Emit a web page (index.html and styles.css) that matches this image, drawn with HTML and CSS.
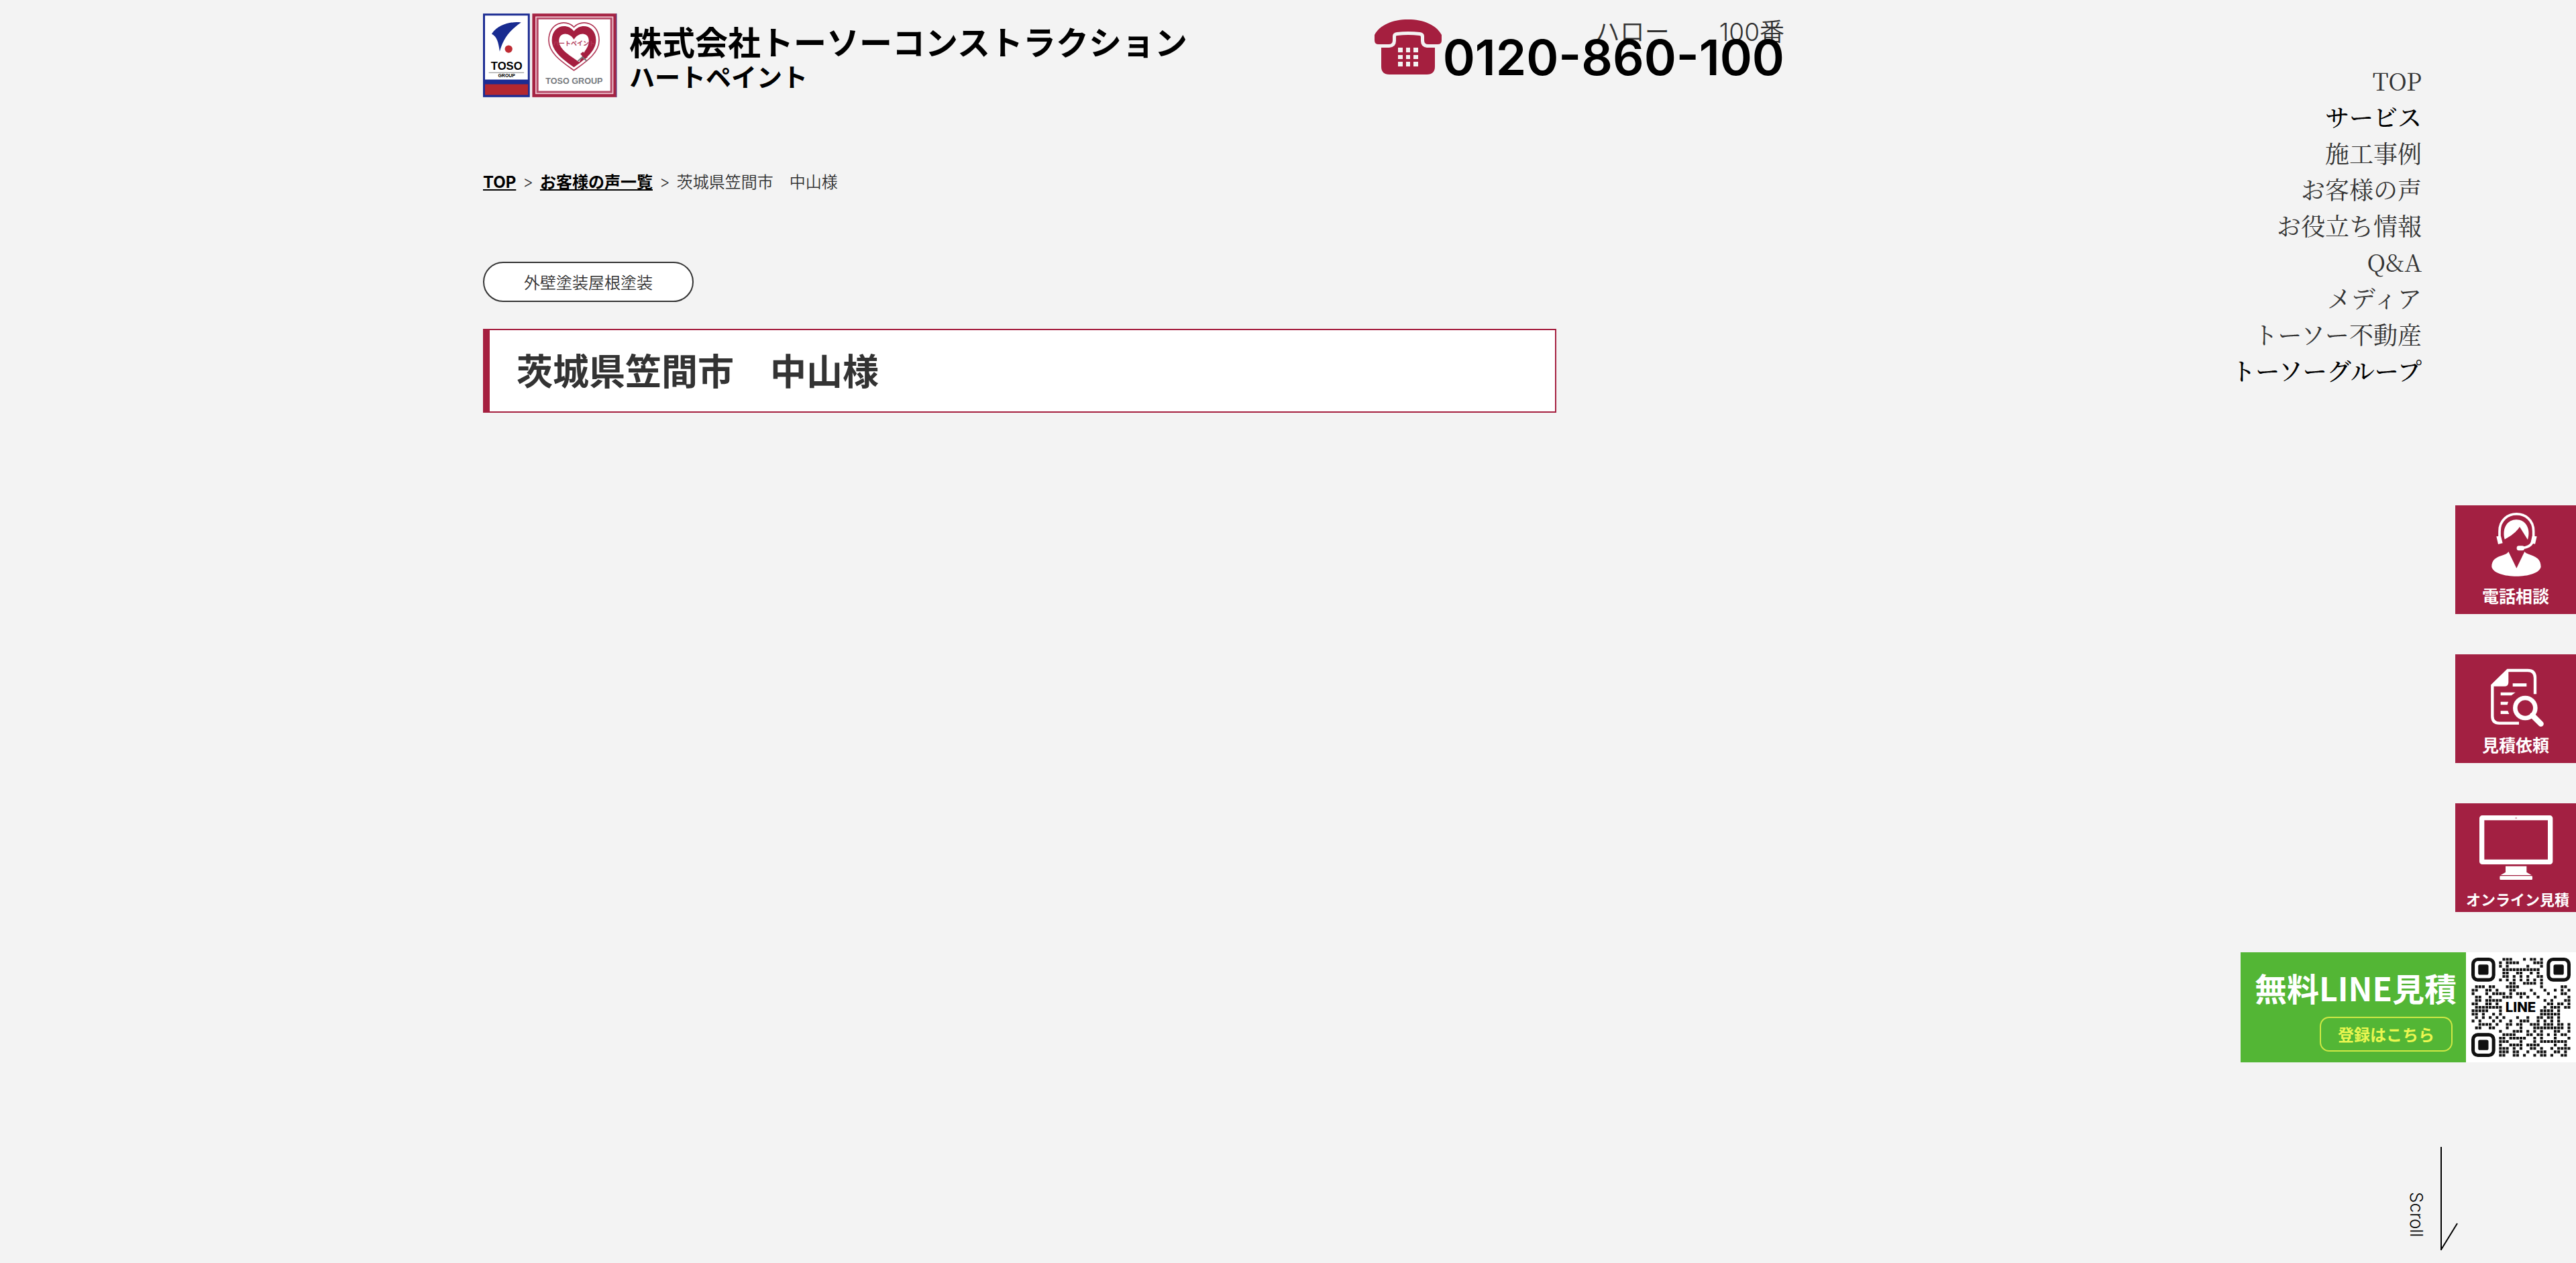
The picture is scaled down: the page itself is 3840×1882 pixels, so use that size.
FILE: index.html
```html
<!DOCTYPE html>
<html lang="ja">
<head>
  <meta charset="UTF-8">
  <meta name="viewport" content="width=device-width, initial-scale=1.0">
  <title>茨城県笠間市 中山様 | トーソーコンストラクション</title>
  <link rel="stylesheet" href="styles.css">
</head>
<body>
  <div class="page">
    <div class="content">
      <header class="header">
        <a class="brand" href="#">
          <svg class="brand-logo" viewBox="60 60 602 375" aria-hidden="true">
            <!-- TOSO mark -->
            <rect x="60" y="60" width="210" height="375" fill="#1c2c93"/>
            <rect x="69" y="69" width="192" height="287" fill="#fff"/>
            <rect x="69" y="377" width="193" height="48" fill="#b4272f"/>
            <path d="M231 100C190 94 130 106 99 151C122 164 129 185 135 230C147 190 163 146 231 100Z" fill="#182b90"/>
            <circle cx="175" cy="219" r="17" fill="#bf2b33"/>
            <text class="logo-toso" x="166" y="312">TOSO</text>
            <path d="M86 325H244" stroke="#888" stroke-width="3"/>
            <text class="logo-group" x="166" y="345">GROUP</text>
            <!-- Heart Paint mark -->
            <rect x="281" y="60" width="379" height="375" fill="#a52343"/>
            <rect x="657" y="60" width="3" height="375" fill="#4b4a97"/>
            <rect x="295" y="73" width="350" height="348" fill="#f1ccd6"/>
            <rect x="300" y="78" width="340" height="338" fill="#b54765"/>
            <rect x="309" y="86" width="322" height="321" fill="#fff"/>
            <path d="M468 315C420 280 355 240 355 180C355 100 432 82 468 121C504 82 581 100 581 180C581 240 516 280 468 315Z" fill="#fff" stroke="#b23a59" stroke-width="5"/>
            <path d="M468 301C425 270 369 232 369 180C369 112 438 100 468 139C498 100 567 112 567 180C567 232 511 270 468 301Z" fill="#a51f40"/>
            <path d="M492 278C456 252 401 222 401 183C401 142 448 142 468 177C488 142 535 142 535 183C535 200 528 215 516 230Z" fill="#fff"/>
            <path d="M497 241l12-10 20 25-12 9z" fill="#a51f40"/>
            <path d="M486 273l20-18 20 18" fill="none" stroke="#777" stroke-width="6"/>
            <text class="logo-heart" x="468" y="205">ハートペイント</text>
            <text class="logo-name" x="469" y="376">TOSO GROUP</text>
          </svg>
          <span class="brand-text">
            <span class="brand-company">株式会社トーソーコンストラクション</span>
            <span class="brand-shop">ハートペイント</span>
          </span>
        </a>
        <a class="tel" href="tel:0120860100">
          <svg class="tel-icon" viewBox="0 0 100 82" aria-hidden="true">
            <path d="M0 23C8 8 27 0 50 0C73 0 92 8 100 23V31Q100 37 94 37H80Q74 37 74 31V25Q74 20 68 19Q50 17 33 19Q27 20 27 25V31Q27 37 21 37H6Q0 37 0 31Z" fill="#a51f3f"/>
            <path d="M10 42H22Q32 41 32 32V25Q32 24 34 24Q50 22 67 24Q69 24 69 26V32Q69 41 78 42H90V70Q90 82 78 82H22Q10 82 10 70Z" fill="#a51f3f"/>
            <path d="M35 42h7v7h-7zM47 42h6v7h-6zM58 42h7v7h-7zM35 53h7v6h-7zM47 53h6v6h-6zM58 53h7v6h-7zM35 63h7v7h-7zM47 63h6v7h-6zM58 63h7v7h-7z" fill="#f3f3f3"/>
          </svg>
          <span class="tel-text">
            <span class="tel-hello">ハロー　　100番</span>
            <span class="tel-number">0120-860-100</span>
          </span>
        </a>
      </header>

      <nav class="breadcrumb" aria-label="パンくず">
        <a href="#">TOP</a>
        <span>&gt;</span>
        <a href="#">お客様の声一覧</a>
        <span>&gt;</span>
        <span>茨城県笠間市　中山様</span>
      </nav>

      <main class="voice">
        <p class="voice-tag">外壁塗装屋根塗装</p>
        <h1 class="voice-title">茨城県笠間市　中山様</h1>
      </main>
    </div>

    <aside class="side">
      <nav class="menu">
        <a href="#">TOP</a>
        <a class="menu-parent" href="#">サービス</a>
        <a href="#">施工事例</a>
        <a href="#">お客様の声</a>
        <a href="#">お役立ち情報</a>
        <a href="#">Q&amp;A</a>
        <a href="#">メディア</a>
        <a href="#">トーソー不動産</a>
        <a class="menu-parent" href="#">トーソーグループ</a>
      </nav>

      <div class="contact">
        <a class="contact-btn" href="#">
          <svg viewBox="60 39 540 360" aria-hidden="true">
            <path d="M258 190V155C258 52 410 52 410 155V190C405 218 385 229 350 230" fill="none" stroke="#fff" stroke-width="11"/>
            <path d="M244 178l20-2 8 32-20 5zM404 176l21 2-8 34-20-5z" fill="#fff"/>
            <rect x="335" y="220" width="34" height="21" rx="9" fill="#fff"/>
            <path d="M281 191C268 137 296 103 333 103C374 103 400 143 384 193L348 135C335 157 308 177 281 191Z" fill="#fff"/>
            <path d="M298 246L334 320L370 246C386 267 443 258 443 314C430 370 237 370 223 314C223 258 286 270 298 246Z" fill="#fff"/>
          </svg>
          <span>電話相談</span>
        </a>
        <a class="contact-btn" href="#">
          <svg viewBox="60 45 540 360" aria-hidden="true">
            <path d="M417 223V150Q417 117 384 117H295L226 184V322Q226 353 257 353H345" fill="none" stroke="#fff" stroke-width="13"/>
            <path d="M298 117V170Q298 188 280 188H224Z" fill="#fff"/>
            <path d="M317 175h62v14h-62zM263 215h66l-18 14h-48zM263 257h34l-4 14h-30zM263 298h32l6 14h-38z" fill="#fff"/>
            <circle cx="373" cy="285" r="45" fill="none" stroke="#fff" stroke-width="20"/>
            <path d="M405 318L443 356" stroke="#fff" stroke-width="25" stroke-linecap="round"/>
          </svg>
          <span>見積依頼</span>
        </a>
        <a class="contact-btn contact-online" href="#">
          <svg viewBox="60 51 540 384" aria-hidden="true">
            <rect x="179" y="116" width="306" height="197" rx="2" fill="none" stroke="#fff" stroke-width="22" stroke-linejoin="round"/>
            <circle cx="332" cy="117" r="4" fill="#d79cab"/>
            <path d="M285 332h94v27l22 13H263l22-13z" fill="#fff"/>
            <rect x="259" y="376" width="146" height="17" rx="4" fill="#fff"/>
          </svg>
          <span>オンライン見積</span>
        </a>
        <a class="line" href="#">
          <span class="line-text">
            <span class="line-title">無料LINE見積</span>
            <span class="line-btn">登録はこちら</span>
          </span>
          <svg class="line-qr" viewBox="0 0 29 29" role="img" aria-label="LINE QR">
            <g fill="none" stroke="#111" stroke-width="1">
              <rect x="0.5" y="0.5" width="6" height="6" rx="1.4"/>
              <rect x="22.5" y="0.5" width="6" height="6" rx="1.4"/>
              <rect x="0.5" y="22.5" width="6" height="6" rx="1.4"/>
            </g>
            <g fill="#111">
              <rect x="2" y="2" width="3" height="3" rx="0.5"/>
              <rect x="24" y="2" width="3" height="3" rx="0.5"/>
              <rect x="2" y="24" width="3" height="3" rx="0.5"/>
            </g>
            <path id="qr-dots" fill="#111"/>
            <text class="qr-label" x="14.4" y="15.8">LINE</text>
          </svg>
        </a>
      </div>

      <a class="scroll" href="#">
        <span>Scroll</span>
        <svg viewBox="0 0 26 154" aria-hidden="true">
          <path d="M1 0V154" stroke="#000" stroke-width="2"/>
          <path d="M1 153L25 114" stroke="#000" stroke-width="2"/>
        </svg>
      </a>
    </aside>
  </div>
  <script src="qr.js"></script>
</body>
</html>
```
FILE: styles.css
```css
body {
  margin: 0;
  background-color: #f3f3f3;
  color: #333;
  font-family: "Noto Sans CJK JP", sans-serif;
  font-size: 24px;
  font-weight: 350;
}
a {
  color: inherit;
  text-decoration: none;
}
svg {
  display: block;
}
.page {
  display: flex;
  justify-content: space-between;
  min-height: 100vh;
}
.content {
  flex: 1;
  padding: 20px 0 0 18.75vw;
}

/* header */
.header {
  display: flex;
  justify-content: space-between;
  align-items: flex-start;
  max-width: 1940px;
}
.brand {
  display: flex;
  gap: 18px;
  color: #000;
}
.brand-logo {
  width: 200px;
  height: 125px;
}
.brand-text {
  display: flex;
  flex-direction: column;
  padding-top: 13px;
  font-weight: 700;
}
.brand-company {
  font-size: 49px;
  line-height: 56px;
}
.brand-shop {
  font-size: 38px;
  line-height: 48px;
}
.logo-toso,
.logo-group,
.logo-name {
  font-family: "Liberation Sans", sans-serif;
  font-weight: 700;
  text-anchor: middle;
}
.logo-toso {
  font-size: 50px;
}
.logo-group {
  font-size: 21px;
}
.logo-name {
  font-size: 38px;
  fill: #777b80;
}
.logo-heart {
  font-size: 27px;
  font-weight: 700;
  text-anchor: middle;
  fill: #b23a59;
}
.tel {
  display: flex;
  align-items: flex-start;
  gap: 2px;
  padding-top: 9px;
}
.tel-icon {
  width: 100px;
  height: 82px;
}
.tel-text {
  display: flex;
  flex-direction: column;
  align-items: flex-end;
}
.tel-hello {
  font-family: Inter, "Noto Sans CJK JP", sans-serif;
  font-size: 37px;
  line-height: 37px;
}
.tel-number {
  margin-top: -16px;
  color: #000;
  font-family: Inter, sans-serif;
  font-size: 73px;
  font-weight: 600;
  line-height: 72px;
}

/* breadcrumb */
.breadcrumb {
  display: flex;
  gap: 10px;
  margin-top: 109px;
  font-family: Inter, "Noto Sans CJK JP", sans-serif;
  line-height: 36px;
}
.breadcrumb a {
  color: #000;
  font-weight: 700;
  text-decoration: underline;
}

/* customer voice */
.voice {
  display: flex;
  flex-direction: column;
  align-items: flex-start;
  gap: 40px;
  max-width: 1600px;
  margin-top: 100px;
}
.voice-tag {
  margin: 0;
  padding: 0 59px;
  border: 2px solid #333;
  border-radius: 30px;
  background-color: #fff;
  line-height: 56px;
}
.voice-title {
  box-sizing: border-box;
  width: 100%;
  margin: 0;
  padding: 18px 40px 22px;
  border: 2px solid #a51f3f;
  border-left-width: 10px;
  background-color: #fff;
  font-size: 54px;
  font-weight: 700;
  line-height: 81px;
}

/* right side */
.side {
  display: flex;
  flex-direction: column;
  align-items: flex-end;
  padding: 93px 0 20px;
  box-sizing: border-box;
}
.menu {
  display: flex;
  flex-direction: column;
  align-items: flex-end;
  padding-right: 230px;
  font-family: "Noto Serif CJK JP", "Noto Sans CJK JP", serif;
  font-size: 36px;
  font-weight: 400;
  line-height: 54px;
}
.menu-parent {
  color: #000;
  font-weight: 500;
}
.contact {
  display: flex;
  flex-direction: column;
  align-items: flex-end;
  gap: 60px;
  margin-top: 174px;
}
.contact-btn {
  width: 180px;
  height: 162px;
  background-color: #a32042;
  color: #fff;
  font-size: 25px;
  font-weight: 700;
  line-height: 28px;
  text-align: center;
}
.contact-online {
  font-size: 22px;
}
.contact-online span {
  padding-left: 6px;
}
.line {
  display: flex;
  height: 164px;
  background-color: #fff;
}
.line-text {
  display: flex;
  flex-direction: column;
  align-items: flex-end;
  gap: 12px;
  box-sizing: border-box;
  width: 336px;
  padding: 20px 14px 0 0;
  background-color: #53b635;
  font-weight: 700;
}
.line-title {
  color: #fff;
  font-size: 48px;
  line-height: 64px;
}
.line-btn {
  margin-right: 6px;
  padding: 0 25px;
  border: 2px solid #cfe845;
  border-radius: 14px;
  color: #eaf650;
  line-height: 48px;
}
.line-qr {
  width: 148px;
  height: 148px;
  padding: 8px;
}
.qr-label {
  font-family: Inter, sans-serif;
  font-size: 4px;
  font-weight: 800;
  text-anchor: middle;
}
.scroll {
  display: flex;
  gap: 20px;
  align-items: flex-end;
  margin-top: 126px;
  padding-right: 176px;
  color: #000;
}
.scroll span {
  margin-bottom: 20px;
  font-family: Inter, sans-serif;
  font-size: 26px;
  line-height: 32px;
  writing-mode: vertical-rl;
}
.scroll svg {
  width: 26px;
  height: 154px;
}
```
FILE: qr.js
```js
// columns of the dark modules in each row, finder patterns excluded
const rows = [
  [9, 10, 11, 15, 17, 18, 20],
  [8, 10, 11, 12, 13, 18, 19, 20],
  [8, 10, 16, 20],
  [9, 10, 11, 12, 13, 14, 15, 16, 17, 18, 19],
  [9, 10, 13, 14, 17, 19],
  [9, 10, 12, 14, 16, 19, 20],
  [8, 10, 12, 14, 16, 18, 20],
  [11, 12, 15, 16, 17, 18, 20],
  [1, 2, 3, 5, 6, 10, 11, 12, 13, 20, 26, 27],
  [0, 1, 4, 5, 7, 11, 12, 17, 21, 24, 26, 28],
  [0, 4, 6, 7, 8, 9, 11, 13, 14, 15, 18, 22, 26, 27],
  [1, 2, 5, 9, 10, 11, 14, 16, 19, 24, 28],
  [1, 2, 4, 5, 6, 7, 8, 21, 23, 27, 28],
  [0, 1, 4, 5, 7, 22, 23, 25, 26, 28],
  [1, 2, 3, 4, 5, 6, 7, 8, 21, 23, 24, 25, 27, 28],
  [0, 1, 2, 3, 4, 8, 20, 21, 22, 23, 25],
  [0, 1, 3, 6, 8, 20, 21, 22, 23, 24, 25],
  [1, 3, 5, 7, 9, 13, 16, 19, 20, 22, 23, 25],
  [0, 2, 6, 8, 11, 14, 15, 16, 19, 21, 23, 25],
  [2, 3, 4, 5, 7, 10, 11, 13, 14, 17, 18, 19, 21, 22, 23, 25, 26, 28],
  [1, 2, 5, 6, 10, 14, 18, 19, 20, 21, 22, 23, 24, 25, 26, 28],
  [8, 12, 13, 14, 16, 18, 20, 24, 25, 28],
  [9, 10, 11, 12, 16, 17, 19, 20, 22, 24, 26, 27],
  [8, 9, 11, 12, 13, 14, 15, 18, 20, 24, 28],
  [8, 9, 10, 14, 18, 20, 21, 22, 23, 24, 25, 26, 27],
  [8, 11, 12, 13, 14, 16, 17, 18, 19, 24, 27],
  [8, 9, 10, 12, 14, 17, 18, 20, 23, 25, 26, 27, 28],
  [8, 9, 10, 12, 13, 16, 19, 20, 21, 24, 25, 27],
  [8, 9, 12, 13, 15, 18, 20, 21, 23, 26, 27]
];

const dots = rows.map((cols, y) =>
  cols.map(x => `M${x + 0.1} ${y + 0.1}h.8v.8h-.8z`).join('')
).join('');

document.getElementById('qr-dots').setAttribute('d', dots);
```
